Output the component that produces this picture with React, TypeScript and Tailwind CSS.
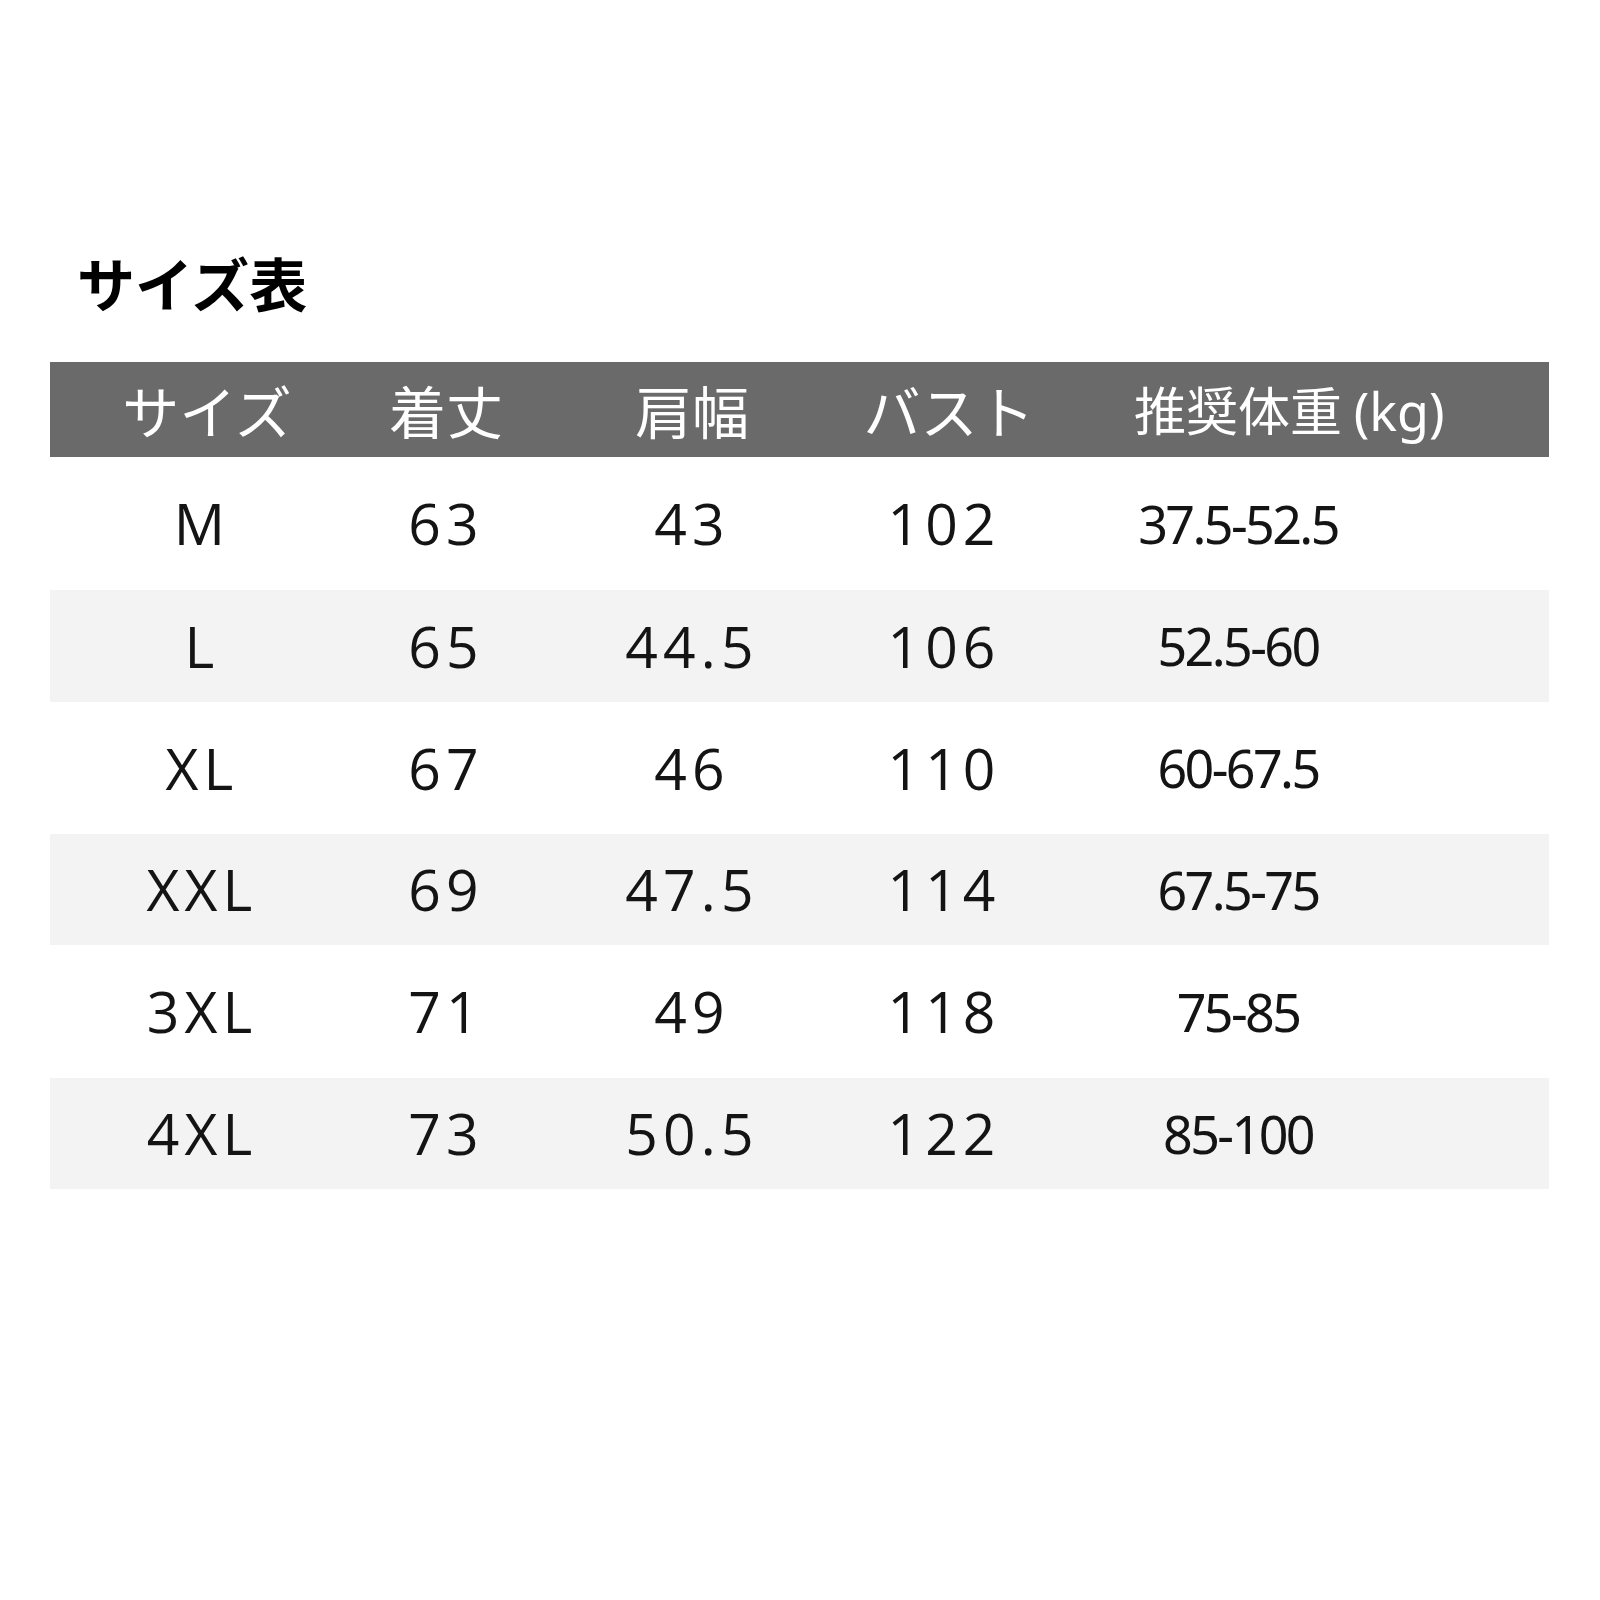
import React from 'react';

// size chart rows: [size, length, shoulder, bust, weight]
const ROWS: { cells: string[]; striped: boolean; h: string }[] = [
  { cells: ['M', '63', '43', '102', '37.5-52.5'], striped: false, h: 'h-[133px]' },
  { cells: ['L', '65', '44.5', '106', '52.5-60'], striped: true, h: 'h-[112px]' },
  { cells: ['XL', '67', '46', '110', '60-67.5'], striped: false, h: 'h-[132px]' },
  { cells: ['XXL', '69', '47.5', '114', '67.5-75'], striped: true, h: 'h-[111px]' },
  { cells: ['3XL', '71', '49', '118', '75-85'], striped: false, h: 'h-[133px]' },
  { cells: ['4XL', '73', '50.5', '122', '85-100'], striped: true, h: 'h-[111px]' },
];

const GRID = 'grid grid-cols-[304px_184px_308px_196px_392px_1fr] items-center';
const JP = "font-['Noto_Sans_CJK_JP','Noto_Sans',sans-serif]";

export default function App() {
  return (
    <div className="w-[1600px] h-[1600px] bg-white pt-[253px]">
      <h1 className={`${JP} pl-[77px] text-[58px] leading-none font-bold text-black`}>サイズ表</h1>

      <div className="mt-[51px] ml-[50px] w-[1499px]">
        {/* header */}
        <div className={`${GRID} h-[95px] bg-[#6a6a6a] text-white ${JP} text-[57px] leading-none font-normal`}>
          <div className="text-center pl-[10px]">サイズ</div>
          <div className="text-center">着丈</div>
          <div className="text-center">肩幅</div>
          <div className="text-center pl-[10px]">バスト</div>
          <div className="text-center pl-[92px] whitespace-nowrap text-[52px]">
            推奨体重 <span className="font-['Noto_Sans',sans-serif]">(kg)</span>
          </div>
          <div />
        </div>

        {ROWS.map((row) => (
          <div key={row.cells[0]} className={`${GRID} ${row.h} ${row.striped ? 'bg-[#f3f3f3]' : 'bg-white'}`}>
            {row.cells.slice(0, 4).map((c, i) => (
              <div
                key={i}
                className="text-center font-['Open_Sans',sans-serif] text-[57px] leading-none tracking-[0.09em] text-[#141414]"
              >
                {c}
              </div>
            ))}
            <div className="text-center font-['Noto_Sans',sans-serif] text-[52px] leading-none tracking-[-0.05em] text-[#141414]">
              {row.cells[4]}
            </div>
            <div />
          </div>
        ))}
      </div>
    </div>
  );
}
